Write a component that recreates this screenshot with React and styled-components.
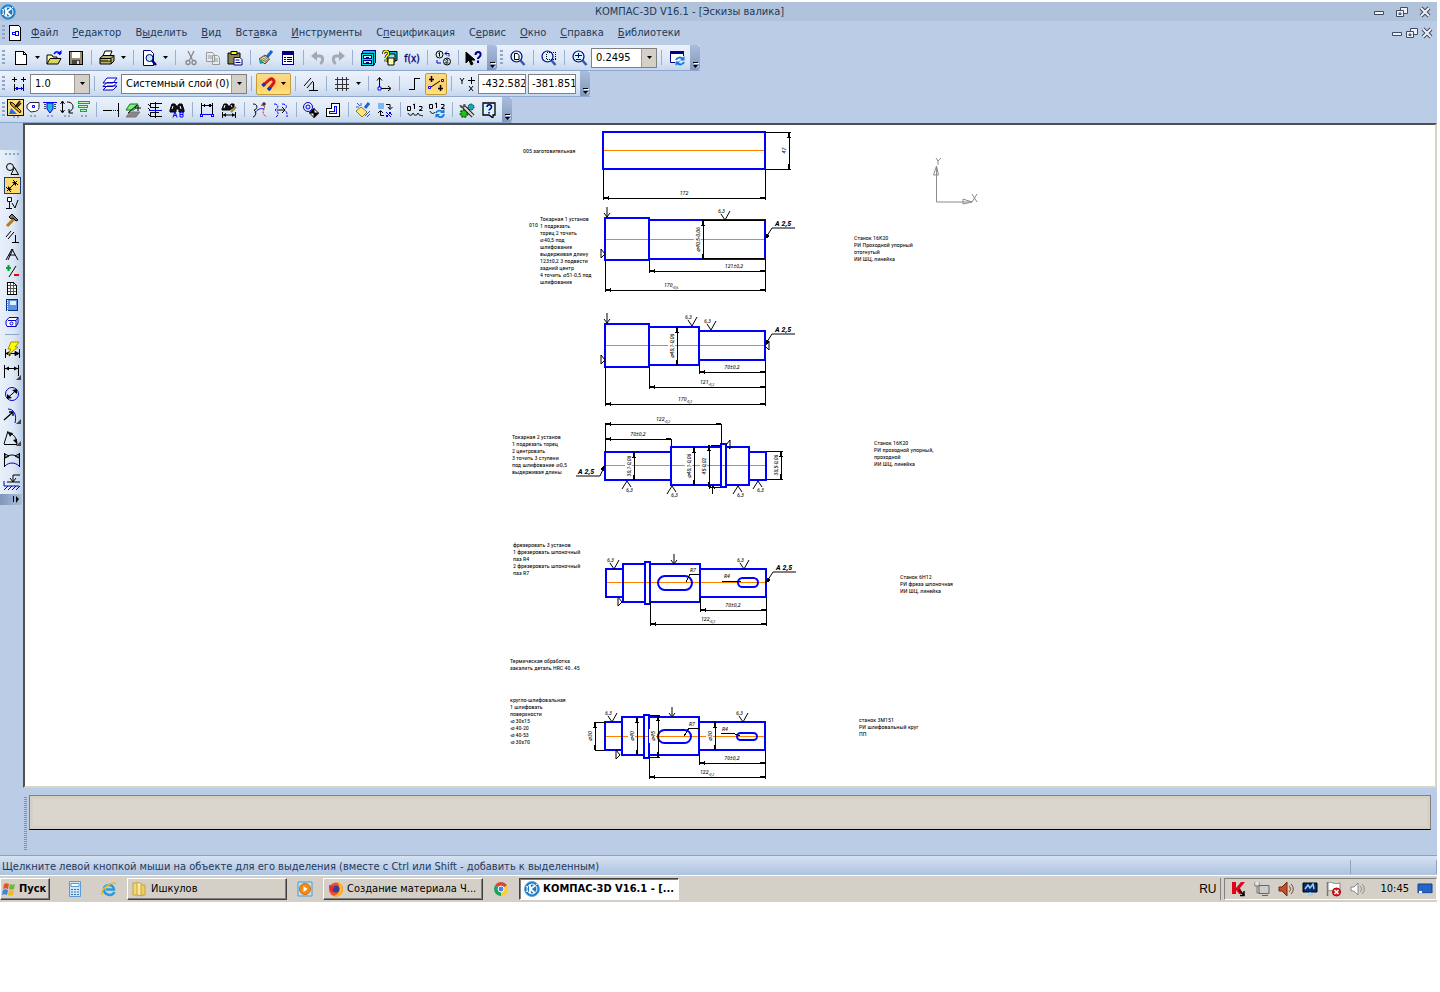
import React from 'react';
import styled, { createGlobalStyle } from 'styled-components';

const GlobalStyle = createGlobalStyle`
  body {
    margin: 0;
    background: #fff;
  }
  button, input, select {
    font: inherit;
    color: inherit;
  }
`;

const App = styled.div`
  margin: 2px 3px 0 0;
  background: #bbcde6;
  color: #000;
  font-family: 'DejaVu Sans Condensed', 'DejaVu Sans', sans-serif;
  font-size: 11px;
  line-height: 14px;
`;

const TitleBar = styled.header`
  display: flex;
  align-items: center;
  height: 19px;
  background: #b0c3da;
  color: #1e395b;
`;
const Title = styled.h1`
  flex: 1;
  margin: 0;
  padding-right: 10px;
  font-size: 11px;
  font-weight: normal;
  text-align: center;
`;
const WindowButtons = styled.div`
  display: flex;
  gap: ${p => p.$gap}px;
  padding-right: ${p => p.$end}px;
`;
const PlainButton = styled.button`
  display: flex;
  align-items: center;
  justify-content: center;
  padding: 0;
  border: 0;
  background: none;
`;

const MenuBar = styled.nav`
  display: flex;
  align-items: center;
  height: 24px;
  padding-left: 2px;
  color: #1e395b;
`;
const MenuList = styled.div`
  display: flex;
  flex: 1;
  gap: 14px;
  padding-left: 9px;
`;
const MenuLink = styled.a`
  color: inherit;
  text-decoration: none;
`;

const ToolRow = styled.div`
  display: flex;
  height: 26px;
`;
const Toolbar = styled.div`
  display: flex;
  align-items: center;
  box-sizing: border-box;
  height: 26px;
  padding-left: ${p => p.$start || 0}px;
  border-bottom: 1px solid #8ea8cf;
  background: linear-gradient(#eaf1fb, #dde8f6 60%, #c6d7ee);
`;
const Grip = styled.span`
  width: 3px;
  height: 16px;
  margin-right: ${p => p.$after || 7}px;
  background: repeating-linear-gradient(#8fa6c9 0 2px, transparent 2px 4px);
`;
const ToolButton = styled.button`
  display: flex;
  align-items: center;
  justify-content: center;
  box-sizing: border-box;
  width: ${p => p.$w || 22}px;
  height: 22px;
  padding: 0;
  border: 1px solid ${p => (p.$on ? '#c29b3c' : 'transparent')};
  border-radius: 2px;
  background: ${p => (p.$on ? 'linear-gradient(#fbdb8c, #fdcf6a 60%, #ffe37e)' : 'none')};
`;
const SmallButton = styled.button`
  display: flex;
  flex-direction: column;
  align-items: center;
  box-sizing: border-box;
  width: 17px;
  height: 21px;
  padding: 0;
  border: 0;
  background: none;
`;
const SmallIcon = styled.span`
  display: flex;
  box-sizing: border-box;
  border: 1px solid ${p => (p.$on ? '#000080' : 'transparent')};
  background: ${p => (p.$on ? '#ffdf7a' : 'none')};
`;
const Dots = styled.span`
  width: 6px;
  height: 2px;
  background: linear-gradient(90deg, #8fa6c9 2px, transparent 2px 4px, #8fa6c9 4px);
`;
const Separator = styled.span`
  width: 1px;
  height: 15px;
  margin: 0 ${p => (p.$tight ? 3 : 4)}px 0 4px;
  background: #9ab0d2;
`;
const ArrowButton = styled(PlainButton)`
  width: 11px;
  height: 22px;
`;
const Tail = styled.span`
  display: flex;
  align-items: flex-end;
  justify-content: center;
  align-self: stretch;
  width: 10px;
  margin-left: 2px;
  border-radius: 0 3px 3px 0;
  background: linear-gradient(#a9bedd, #8197bb);
`;
const Combo = styled.span`
  display: flex;
  box-sizing: border-box;
  width: ${p => p.$w}px;
  height: 20px;
  border: 1px solid #808080;
  background: #fff;
`;
const ComboSelect = styled.select`
  flex: 1;
  min-width: 0;
  padding: 0 0 0 4px;
  border: 0;
  background: #fff;
  appearance: none;
`;
const ComboArrow = styled.span`
  display: flex;
  align-items: center;
  justify-content: center;
  width: 14px;
  border-left: 1px solid #a09c94;
  background: #d4d0c8;
`;
const CoordInput = styled.input`
  box-sizing: border-box;
  width: 48px;
  height: 20px;
  margin-right: 2px;
  padding: 0 0 0 3px;
  border: 1px solid #808080;
  background: #fff;
`;

const Workspace = styled.main`
  display: flex;
  align-items: flex-start;
`;
const SideColumn = styled.aside`
  flex: none;
  width: 23px;
  padding-top: 27px;
`;
const SidePanel = styled.div`
  display: flex;
  flex-direction: column;
  align-items: center;
  box-sizing: border-box;
  width: 22px;
  padding: 3px 0 1px 2px;
  border-radius: 0 3px 0 0;
  background: linear-gradient(90deg, #e8f0fa, #dde8f6 60%, #bdd0ea);
`;
const SideDots = styled.span`
  width: 14px;
  height: 2px;
  margin-bottom: 5px;
  background: repeating-linear-gradient(90deg, #8fa6c9 0 2px, transparent 2px 4px);
`;
const SideButton = styled.button`
  display: flex;
  align-items: center;
  justify-content: center;
  box-sizing: border-box;
  width: ${p => (p.$tall ? 20 : 17)}px;
  height: ${p => (p.$tall ? 22 : 17)}px;
  padding: 0;
  border: 1px solid ${p => (p.$on ? '#1c3d7c' : 'transparent')};
  background: ${p => (p.$on ? '#ffd96a' : 'none')};
`;
const SideRule = styled.span`
  width: 14px;
  height: 1px;
  margin: 4px 0;
  background: #8fa6c9;
`;
const SideTail = styled.div`
  display: flex;
  align-items: center;
  justify-content: flex-end;
  width: 22px;
  height: 11px;
  background: linear-gradient(90deg, #8197bb, #a9bedd);
`;
const Canvas = styled.section`
  flex: 1;
  min-width: 0;
  border: 2px solid;
  border-color: #505050 #d6d3c9 #d6d3c9 #505050;
  background: #fff;
`;
const Sheet = styled.svg`
  display: block;
  width: 100%;
  height: 661px;
`;

const PropertyArea = styled.section`
  display: flex;
  gap: 2px;
  height: 67px;
  padding: 0 6px 0 24px;
`;
const PropertyGrip = styled.span`
  width: 3px;
  height: 53px;
  margin-top: 9px;
  background: repeating-linear-gradient(#948f84 0 1px, transparent 1px 2px);
`;
const PropertyPanel = styled.div`
  flex: 1;
  box-sizing: border-box;
  height: 35px;
  margin-top: 7px;
  border: 1px solid #808080;
  border-bottom-color: #000;
  background: #dad6ce;
  box-shadow: inset 0 0 0 3px #d4d0c4;
`;

const StatusBar = styled.footer`
  display: flex;
  align-items: center;
  box-sizing: border-box;
  height: 20px;
  padding: 2px 0 0 2px;
  border-top: 1px solid #87a2c9;
  background: linear-gradient(#d6e2f2, #adc3e0);
  color: #1e395b;
`;
const StatusText = styled.span`
  flex: 1;
`;
const StatusCell = styled.span`
  width: 85px;
  height: 14px;
  border-left: 1px solid #8ba3c4;
  border-right: 1px solid #8ba3c4;
`;

const TaskBar = styled.footer`
  display: flex;
  align-items: center;
  height: 26px;
  border-top: 1px solid #fff;
  background: #d4d0c8;
`;
const TaskButton = styled.button`
  display: flex;
  align-items: center;
  gap: 3px;
  box-sizing: border-box;
  width: ${p => p.$w || 160}px;
  height: 22px;
  padding: 0 ${p => (p.$w ? 1 : 4)}px;
  border: 1px solid;
  border-color: ${p => (p.$on ? '#404040 #fff #fff #404040' : '#fff #404040 #404040 #fff')};
  box-shadow: inset ${p => (p.$on ? '1px 1px' : '-1px -1px')} #808080;
  background: ${p => (p.$on ? '#fff' : '#d4d0c8')};
  font-weight: ${p => (p.$bold ? 'bold' : 'normal')};
  white-space: nowrap;
`;
const QuickButton = styled(PlainButton)`
  width: ${p => (p.$narrow ? 34 : 36)}px;
  height: 22px;
`;
const QuickGroup = styled.span`
  display: flex;
  padding: 0 1px 0 8px;
`;
const Language = styled.span`
  flex: 1;
  padding-right: 4px;
  font-family: 'Liberation Sans', Arial, sans-serif;
  font-size: 12px;
  text-align: right;
`;
const Tray = styled.div`
  display: flex;
  align-items: center;
  gap: 8px;
  box-sizing: border-box;
  height: 22px;
  margin-left: 3px;
  padding: 0 3px 0 5px;
  border: 1px solid;
  border-color: #808080 #fff #fff #808080;
`;
const TrayRule = styled.span`
  width: 1px;
  height: 22px;
  background: #808080;
`;
const Clock = styled.time`
  padding: 0 0 0 6px;
`;

/* ---------- icons ---------- */

const Icon = ({ w = 16, h = 16, children, crisp }) => (
  <svg
    width={w}
    height={h}
    viewBox={`0 0 ${w} ${h}`}
    fill="none"
    stroke="#000"
    shapeRendering={crisp ? 'crispEdges' : 'auto'}
    aria-hidden="true"
  >
    {children}
  </svg>
);

const Arrow = () => (
  <svg width="5" height="3" viewBox="0 0 5 3" aria-hidden="true">
    <path d="M0 0h5L2.5 3z" />
  </svg>
);

const TailMark = () => (
  <svg width="7" height="9" viewBox="0 0 7 9" aria-hidden="true">
    <path d="M1 1h5v1H1zM1 4h5L3.500 7z" />
    <path d="M2 2h5v1H2zM6 5h1L4 8z" fill="#fff" />
  </svg>
);

const KompasLogo = () => (
  <Icon>
    <circle cx="8" cy="8" r="7.500" fill="#1c77c3" stroke="#5aa5de" />
    <circle cx="8" cy="8" r="5" stroke="#fff" />
    <path d="M6 4v8M11 4.500L6.500 8l4.500 4" stroke="#fff" strokeWidth="1.800" />
    <path d="M2 5l2 2M2 11l2-2M13 3l-1 1" stroke="#fff" />
  </Icon>
);

const icons = {
  doc: (
    <Icon crisp>
      <path d="M2.500 1.500h8l3 3v10h-11z" fill="#fff" />
      <path d="M10.500 1.500v3h3" />
    </Icon>
  ),
  open: (
    <Icon>
      <path d="M1 14V5h5l1 2h4v2" fill="#ffff9c" />
      <path d="M1 14l3-5.500h11L12 14z" fill="#d8d860" />
      <path d="M8 4c2-3 5-3 6 1" stroke="#00f" strokeWidth="1.500" />
      <path d="M11 4h4.500V0z" fill="#00f" stroke="none" />
    </Icon>
  ),
  save: (
    <Icon crisp>
      <path d="M1.500 1.500h13v13h-13z" fill="#9b8c6c" />
      <path d="M4 2h8v6H4z" fill="#fff" stroke="none" />
      <path d="M4 10h8v4H4z" fill="#444" stroke="none" />
      <path d="M9 11h2v3H9z" fill="#ddd" stroke="none" />
    </Icon>
  ),
  print: (
    <Icon>
      <path d="M4 6l2-5h7l-2 5z" fill="#fff" />
      <path d="M1 8l3-2.500h11V11l-3 3H1z" fill="#b4b470" />
      <path d="M1 8.500h11v5M12 8.500l3-3M1 11h11" />
      <path d="M9 10h2" stroke="#ff0" />
    </Icon>
  ),
  preview: (
    <Icon>
      <path d="M2.500.500h7l3 3v12h-10z" fill="#fff" stroke="#000080" />
      <circle cx="8.500" cy="8" r="3.500" fill="#bdeaff" stroke="#000080" />
      <path d="M11 10.500l4 4.500" stroke="#000080" strokeWidth="2.500" />
    </Icon>
  ),
  cut: (
    <Icon>
      <path d="M5 1l4.500 9M11 1L6.500 10" stroke="#888" strokeWidth="1.300" />
      <circle cx="5" cy="12.500" r="2" stroke="#888" strokeWidth="1.300" />
      <circle cx="11" cy="12.500" r="2" stroke="#888" strokeWidth="1.300" />
    </Icon>
  ),
  copy: (
    <Icon>
      <path d="M1.500 2.500h6l2 2v7h-8zM7.500 5.500h5l2 2v7h-7z" fill="#e6ebf2" stroke="#999" />
      <path d="M3 6h4M3 8h4M9 9h4M9 11h4" stroke="#999" />
    </Icon>
  ),
  paste: (
    <Icon>
      <path d="M1 3h12v11H1z" fill="#8b8455" />
      <path d="M4 1.500h6v3H4z" fill="#ff0" />
      <path d="M7 7.500h6l2 2V15H7z" fill="#fff" stroke="#000080" />
      <path d="M8.500 10h4M8.500 12.500h5" stroke="#000080" />
    </Icon>
  ),
  brush: (
    <Icon>
      <path d="M14 1l-5 6" stroke="#1d65c9" strokeWidth="3" />
      <path d="M7 5l4.500 4L7 14 1 9z" fill="#e8d98a" stroke="#444" />
      <path d="M6 6l5 4.500M3 9l5 3M5 8l4 3" stroke="#777" />
      <path d="M1 9l1 5 4-1z" fill="#0a9aa5" stroke="none" />
    </Icon>
  ),
  props: (
    <Icon crisp>
      <path d="M2.500 1.500h11v13h-11z" fill="#fff" stroke="#000080" />
      <path d="M2 1h12v4H2z" fill="#000080" stroke="none" />
      <path d="M4 7.500h2M4 9.500h2M4 11.500h2M7 7.500h5M7 9.500h5M7 11.500h5" stroke="#000" />
    </Icon>
  ),
  undo: (
    <Icon>
      <path d="M5 6h4.500c4 0 4 5 1 8" stroke="#a3a9b2" strokeWidth="3" />
      <path d="M7 1v10L1 6z" fill="#a3a9b2" stroke="none" />
    </Icon>
  ),
  redo: (
    <Icon>
      <path d="M11 6H6.500c-4 0-4 5-1 8" stroke="#a3a9b2" strokeWidth="3" />
      <path d="M9 1v10l6-5z" fill="#a3a9b2" stroke="none" />
    </Icon>
  ),
  library: (
    <Icon crisp>
      <path d="M1.500 3.500l2-3h12v12l-2 3h-12z" fill="#00c8d0" stroke="#000080" />
      <path d="M1.500 3.500h12v12h-12z" fill="#00dce0" stroke="#000080" />
      <path d="M3.500 5.500h8v3h-8zM3.500 10.500h8v3h-8z" stroke="#000080" fill="#b8f6f6" />
      <path d="M6 7h3M6 12h3" stroke="#000080" />
    </Icon>
  ),
  variables: (
    <Icon>
      <path d="M7 1.500h8v9H7z" fill="#00c8d0" />
      <path d="M5 4h8v8H5z" fill="#8be5e5" />
      <path d="M6 8h6v7H6z" fill="#ffffa8" />
      <path d="M1.500 4c0-4 5.500-4 5 0C6.500 6 4 5 4 8M4 9.500v2" stroke="#000" strokeWidth="3" />
      <path d="M1.500 4c0-4 5.500-4 5 0C6.500 6 4 5 4 8M4 9.500v2" stroke="#ff0" strokeWidth="1.500" />
    </Icon>
  ),
  func: (
    <svg width="20" height="16" viewBox="0 0 20 16" aria-hidden="true">
      <text x="10" y="12" textAnchor="middle" fill="#000080" stroke="#000080" strokeWidth="0.300" fontSize="10">
        f(x)
      </text>
    </svg>
  ),
  renumber: (
    <Icon>
      <circle cx="4.500" cy="4.500" r="3.500" />
      <circle cx="12" cy="11.500" r="3.500" />
      <path d="M3.500 3.500l1-1v4M10.500 10.500c1-2 3-1 2 .500l-2 2h3" />
      <path d="M10 3.500h4v3M2 10v3h4M12 1.500l-2 2 2 2" stroke="#00c" />
    </Icon>
  ),
  help: (
    <Icon w={18}>
      <path d="M1 2v11l3-3 2 5 2-1-2-4h4z" fill="#000" />
      <path d="M10.500 5c0-4 6-4 5 0 0 2-2.500 2-2.500 4M13 10.500V13" stroke="#000080" strokeWidth="2" />
    </Icon>
  ),
  zoomPage: (
    <Icon>
      <circle cx="6.500" cy="6.500" r="5.500" fill="#d9f3ff" stroke="#000080" strokeWidth="1.200" />
      <path d="M4.500 3.500h3l1.500 2v4H4.500z" fill="#fff" />
      <path d="M10.500 10.500l4 4.500" stroke="#3458b0" strokeWidth="2.500" />
    </Icon>
  ),
  zoomArea: (
    <Icon>
      <circle cx="6.500" cy="6.500" r="5.500" fill="#d9f3ff" stroke="#000080" strokeWidth="1.200" />
      <path d="M5.500 2.500h9v7h-9z" strokeDasharray="1 1" shapeRendering="crispEdges" />
      <path d="M10.500 10.500l4 4.500" stroke="#3458b0" strokeWidth="2.500" />
    </Icon>
  ),
  zoomIn: (
    <Icon>
      <circle cx="6.500" cy="6.500" r="5.500" fill="#d9f3ff" stroke="#000080" strokeWidth="1.200" />
      <path d="M6.500 3v5M3 5.500h7M4 9.500h5" stroke="#000080" />
      <path d="M10.500 10.500l4 4.500" stroke="#3458b0" strokeWidth="2.500" />
    </Icon>
  ),
  refresh: (
    <Icon>
      <path d="M6 12.500H1.500v-11h13V6" fill="#fff" stroke="#000080" />
      <path d="M1 2.500h14" stroke="#000080" strokeWidth="3" />
      <path d="M7 10c1-3 5-3 7-1M15 12c-1 3-5 3-7 1" stroke="#1677dc" strokeWidth="2" />
      <path d="M15.500 6v4.500H11zM6.500 16v-4.500H11z" fill="#1677dc" stroke="none" />
    </Icon>
  ),
  step: (
    <Icon crisp>
      <path d="M3.500 1v5M1 3.500h5M12.500 1v5M10 3.500h5M3.500 8v7M12.500 8v7" />
      <path d="M4 12.500h8" stroke="#00f" />
      <path d="M3.500 12.500l3-2v4zM12.500 12.500l-3-2v4z" fill="#00f" stroke="none" />
    </Icon>
  ),
  layers: (
    <Icon>
      <path d="M1 14l4-4h10l-4 4zM1 10.500l4-4h10l-4 4zM1 7l4-5h10l-4 5z" fill="#fff" stroke="#0000c8" />
    </Icon>
  ),
  magnet: (
    <Icon>
      <path d="M2.500 9L8 4c3-3 7 1 4 4l-4 5" stroke="#d81414" strokeWidth="3" />
      <path d="M1.500 10l2.500-2.500M7 14l2.500-2.500" stroke="#1437c8" strokeWidth="3.500" />
    </Icon>
  ),
  perp: (
    <Icon>
      <path d="M1 10l7-8M4 12l6-7" />
      <path d="M10.500 6v8M6 14.500h9" />
    </Icon>
  ),
  grid: (
    <Icon crisp>
      <path d="M3.500 1v14M8.500 1v14M12.500 1v14M1 3.500h14M1 8.500h14M1 12.500h14" stroke="#333" />
    </Icon>
  ),
  axes: (
    <Icon>
      <path d="M3.500 2v10.500H14M1 4.500l2.500-3 2.500 3M12 10l3 2.500-3 2.500" />
      <path d="M2 11h3v3H2z" fill="#fff" stroke="#00f" />
    </Icon>
  ),
  ortho: (
    <Icon crisp>
      <path d="M3 13.500h5.500v-11H14" />
    </Icon>
  ),
  snaps: (
    <Icon w={18}>
      <path d="M4.500 0v6M2 3.500h5M13.500 9v6M11 12.500h5" strokeWidth="1.500" />
      <path d="M4 11l9-6" />
      <path d="M1.500 10.500h2v2h-2zM14.500 3.500h2v2h-2z" fill="#fff" stroke="#00f" />
    </Icon>
  ),
  coords: (
    <Icon>
      <path d="M1 2l2 3 2-3M3 5v3M10 10l4 5M14 10l-4 5M12.500 1v7M9 4.500h7" />
    </Icon>
  ),
  geom: (
    <Icon w={15} h={15}>
      <path d="M1 14l2-6 6 6z" fill="#2a6ae8" stroke="none" />
      <path d="M2 2l3 1 8 8-1 2-9-8z" fill="#f0a000" stroke="#111" />
      <path d="M12 1L7 7M13 3L9 7" stroke="#111" strokeWidth="1.500" />
    </Icon>
  ),
  contour: (
    <Icon h={14}>
      <path d="M5 2.500h9v5c0 3-3 4-5 4L6 12 2 8.500V5z" fill="#fff" stroke="#224" />
      <path d="M7.500 5.500h2v2h-2z" stroke="#00f" />
    </Icon>
  ),
  pocket: (
    <Icon h={14}>
      <path d="M1 2.500h14" stroke="#00f" />
      <path d="M5 3h6v6l-3 4-3-4z" fill="#22b5e8" stroke="#00f" />
      <path d="M3 4v5M13 4v5" stroke="#444" strokeDasharray="1 1" strokeWidth="2" />
    </Icon>
  ),
  updown: (
    <Icon h={14}>
      <path d="M3.500 2v10M1.500 4l2-3 2 3M1.500 10l2 3 2-3M8 2c5 0 6 3 6 5s-1 3-4 5M10 9v4h4" />
    </Icon>
  ),
  tree: (
    <Icon h={14} crisp>
      <path d="M2.500 1.500h11v2h-11zM2.500 5.500h9v2h-9zM4.500 9.500h6v2h-6z" stroke="#00b428" fill="#c9f2c9" />
    </Icon>
  ),
  extend: (
    <Icon crisp>
      <path d="M0 8.500h9M15.500 1v14" />
      <path d="M10 8.500h5" strokeDasharray="1 1" />
    </Icon>
  ),
  planes: (
    <Icon>
      <path d="M1 15l4-5h10l-4 5z" fill="#888" stroke="#777" />
      <path d="M1 8l4-6h8l-4 6z" fill="#7ef07e" stroke="#137a13" />
      <path d="M13 3v6M10 6h6M3 11l9-8" />
    </Icon>
  ),
  align: (
    <Icon crisp>
      <path d="M8.500 0v16M15 1.500H3.500v4H12M12 10.500H3.500v4H15M1 2l2 2M1 6l3 3M1 12l3 3" />
      <path d="M2 8.500h13" stroke="#00f" />
    </Icon>
  ),
  find: (
    <Icon>
      <path d="M1 8l2-6h3l1 2h2l1-2h3l2 6v2h-5V7H7v3H1z" fill="#111" />
      <path d="M3 7l1-3M11 4l1 3" stroke="#fff" />
      <path d="M4 15.500l2-6 2 6M5 13.500h2M11 10v5h3v-5h-3M11 12.500h3" stroke="#00f" />
    </Icon>
  ),
  measure: (
    <Icon crisp>
      <path d="M2.500 1v14M13.500 1v14M3 3.500h10" />
      <path d="M3 12.500h10" stroke="#00f" />
      <path d="M1.500 12.500h2v2h-2zM12.500 12.500h2v2h-2z" stroke="#00f" fill="#fff" />
      <path d="M3 3.500l3-2v4zM13 3.500l-3-2v4z" fill="#000" stroke="none" />
    </Icon>
  ),
  findSize: (
    <Icon>
      <path d="M1 7l2-5h3l1 2h2l1-2h3v3L9 8H1z" fill="#111" />
      <path d="M3 6l1-3M10 3l1 2" stroke="#fff" />
      <path d="M15 5l-5 5" stroke="#a28a24" strokeWidth="2" />
      <path d="M1.500 10v6M14.500 10v6M2 13h12" />
      <path d="M2 13l3-2v4zM14 13l-3-2v4z" fill="#000" stroke="none" />
    </Icon>
  ),
  bend: (
    <Icon>
      <path d="M2 2c6 0 4 6 1 6 3 2 2 6-1 7" />
      <path d="M4 11c2-4 6-5 9-4" stroke="#00f" />
      <path d="M10 3c5 1 4 3 2 6 0 4 2 4 3 6" stroke="#e00" strokeDasharray="2 1" />
      <path d="M13 0v4M11 2h4" />
    </Icon>
  ),
  bendAll: (
    <Icon>
      <path d="M1 2c5 0 5 4 1 6 4 2 4 5 1 7M9 2c6 0 5 4 2 6 4 2 3 5 3 7" stroke="#00f" strokeDasharray="3 1" />
      <path d="M9 5l3 3-3 3M4 8h7" />
    </Icon>
  ),
  shade: (
    <Icon>
      <circle cx="5" cy="5" r="4.500" stroke="#0000c8" />
      <circle cx="5" cy="5" r="2" stroke="#0000c8" />
      <path d="M11 6.500l4.500 4.500-4.500 4.500L6.500 11z" fill="#fff" />
      <path d="M11 6.500V11H6.500zM11 15.500V11h4.500z" fill="#000" />
    </Icon>
  ),
  equid: (
    <Icon crisp>
      <path d="M1.500 14.500v-8h5v-5h8v13z" fill="#fff" />
      <path d="M4.500 11.500v-2h5v-5h2v7z" stroke="#00f" fill="#dfe8ff" />
    </Icon>
  ),
  paint: (
    <Icon>
      <path d="M14 1l-4 5" stroke="#1d65c9" strokeWidth="3" />
      <path d="M6 5l6 5-5 5-6-6z" fill="#ffe680" stroke="#9a7a10" />
      <path d="M2 1l3 3M1 5h3M6 1v3M10 14l5-5M12 15l3-3" stroke="#1c58d8" />
    </Icon>
  ),
  replace: (
    <Icon>
      <path d="M1 1h6v6H1z" fill="#7fb8ef" stroke="none" />
      <path d="M9 2.500h4V7M11 5l2 2.500L15.500 5M7 13.500H3.500V9M1 11l2.500-2.500L6 11" />
      <path d="M9 10l5 5M12 10l3 3M9 13l2 2M14 10l-5 5" stroke="#00c" />
    </Icon>
  ),
  count: (
    <Icon w={18}>
      <path d="M1.500 4.500h3v4h-3zM7 3l1.500-1v5M13 4.500h3v2l-3 2h3.500" />
      <path d="M2 11c1 3 4 3 5 0 1 3 4 3 5 0 1 3 3 2 5 3" />
    </Icon>
  ),
  countRefresh: (
    <Icon w={18}>
      <path d="M1.500 2.500h3v4h-3zM7 2l1.500-1v5M13 2.500h3v2l-3 2h3.500M2 9c1 3 4 3 5 1" />
      <path d="M8 11c1-3 5-3 7-1M16 12c-1 4-5 4-7 1" stroke="#1677dc" strokeWidth="1.800" />
      <path d="M16.500 7v4H12zM7.500 16v-4H12z" fill="#1677dc" stroke="none" />
    </Icon>
  ),
  wrench: (
    <Icon>
      <circle cx="12" cy="5" r="3" fill="#1aa7b8" strokeDasharray="1 1" />
      <circle cx="5" cy="11.500" r="3.500" fill="#1fc41f" stroke="#0a700a" strokeDasharray="2 1" strokeWidth="2" />
      <path d="M4 4l10 10" stroke="#222" strokeWidth="4" />
      <path d="M4 4l10 10" stroke="#ddd" strokeWidth="2" />
      <path d="M1.500 3c0 3 4 3 4-1" stroke="#555" strokeWidth="2" />
    </Icon>
  ),
  helpBox: (
    <Icon>
      <path d="M2 1h12v12h-2v3l-4-3H2z" fill="#d8f4ff" strokeWidth="1.300" />
      <path d="M6 5c0-3 4.500-3 4.500 0C10.500 7 8 7 8 8.500M8 10v1.500" stroke="#000080" strokeWidth="1.500" />
    </Icon>
  ),
};

const sideIcons = {
  shapes: (
    <Icon w={14} h={14}>
      <circle cx="5" cy="5" r="3.500" />
      <path d="M6 12.500l3.500-7 4 7z" />
    </Icon>
  ),
  size: (
    <Icon w={14} h={14}>
      <path d="M2 12L12 2M1 8l5 5M8 1l5 5" />
      <path d="M3 11V7l4 4zM11 3v4L7 3z" fill="#000" stroke="none" />
    </Icon>
  ),
  marks: (
    <Icon w={14} h={14}>
      <path d="M2.500 1.500h4v4h-4zM4.500 6v6.500" stroke="#0000a8" fill="#fff" />
      <path d="M1 12.500h6M7 7l3 5 3-8" />
    </Icon>
  ),
  hammer: (
    <Icon w={14} h={14}>
      <path d="M2 13l7-7" stroke="#b97a1c" strokeWidth="3" />
      <path d="M4 4l3-3 6 6-2 1-3-3-2 1z" fill="#777" />
    </Icon>
  ),
  perp: (
    <Icon w={14} h={14}>
      <path d="M1 7l5-6M3 9l6-7M10.500 5v7M7 12.500h7" />
    </Icon>
  ),
  compass: (
    <Icon w={14} h={14}>
      <path d="M1 13L7 2l6 11M3 13L8 2M4 8h6" />
    </Icon>
  ),
  plusminus: (
    <Icon w={14} h={14}>
      <path d="M3.500 1v6M1 4h5" stroke="#00a030" strokeWidth="2" />
      <path d="M4 13l7-11" />
      <path d="M9 11h5" stroke="#e00" strokeWidth="2" />
    </Icon>
  ),
  sheet: (
    <Icon w={14} h={14} crisp>
      <path d="M2.500 1.500h6l3 3v9h-9z" fill="#fff" />
      <path d="M5.500 2v11M8.500 2v11M3 4.500h8M3 7.500h8M3 10.500h8" stroke="#555" />
    </Icon>
  ),
  book: (
    <Icon w={14} h={14} crisp>
      <path d="M1.500 1.500h11v11h-11z" fill="#5b93e6" stroke="#0a2f86" />
      <path d="M2.500 2v11" stroke="#fff" strokeDasharray="1 1" />
      <path d="M5 3h6v4H5z" fill="#dff0ff" stroke="none" />
    </Icon>
  ),
  part: (
    <Icon w={14} h={14}>
      <path d="M4 2.500h9V8l-2 3.500H2L1 9V6z" fill="#fff" stroke="#0000d0" />
      <path d="M3 5.500h8v6M13 2.500l-2 3" stroke="#0000d0" />
      <circle cx="6.500" cy="8.500" r="1.500" stroke="#0000d0" />
    </Icon>
  ),
  auto: (
    <Icon w={18} h={18}>
      <path d="M2.500 8v9M16.500 8v9M3 12.500h13" />
      <path d="M3 12.500l4-2v4zM16 12.500l-4-2v4z" fill="#000" />
      <path d="M8 1h8l-4 5h3L5 14l3-6H5z" fill="#ff0" stroke="#a69000" />
    </Icon>
  ),
  linear: (
    <Icon w={18} h={18}>
      <path d="M1.500 2v13M15.500 2v11M2 5.500h13" />
      <path d="M2 5.500l4-2v4zM15 5.500l-4-2v4z" fill="#000" stroke="none" />
      <path d="M18 12v5h-5z" fill="#444" stroke="none" />
    </Icon>
  ),
  diameter: (
    <Icon w={18} h={18}>
      <circle cx="9" cy="9" r="6.500" stroke="#0000d0" />
      <path d="M4 13.500L14 4.500" />
      <path d="M4 14V9l5 4zM14 4v5L9 5z" fill="#000" stroke="none" />
    </Icon>
  ),
  radius: (
    <Icon w={18} h={18}>
      <path d="M5 2c6 0 9 6 7 14" stroke="#0000d0" />
      <path d="M1 13l9-8M10 5v4M10 5H6" strokeWidth="1.300" />
      <path d="M18 12v5h-5z" fill="#444" stroke="none" />
    </Icon>
  ),
  angle: (
    <Icon w={18} h={18}>
      <path d="M1 15.500h13M1 15L5 2M5 4c5 0 9 5 9 11" />
      <path d="M5 3l5 1-3 4zM14 15l-4-4 4-1z" fill="#000" stroke="none" />
      <path d="M18 12v5h-5z" fill="#444" stroke="none" />
    </Icon>
  ),
  arc: (
    <Icon w={18} h={18}>
      <path d="M1.500 2v14M16.500 2v14M2 7c4-4 10-4 14 0M2 7V3l4 2zM16 7V3l-4 2z" />
      <path d="M2 15c4-4 10-4 14 0" stroke="#0000d0" />
    </Icon>
  ),
  height: (
    <Icon w={18} h={18}>
      <path d="M10 8V2h7M7 5l3 4 3-4M4 9h13" />
      <path d="M1 8v5h15M1 17l4-4M5 17l4-4M9 17l4-4M13 17l4-4" stroke="#0000d0" />
    </Icon>
  ),
};

const trayIcons = {
  kaspersky: (
    <Icon>
      <path d="M2 1h4v6l5-6h4l-5 6 3 6H9L6 9v4H2z" fill="#e2001a" stroke="none" />
      <path d="M9 9l5 5M14 10v4.500h-4" strokeWidth="1.500" />
    </Icon>
  ),
  network: (
    <Icon>
      <path d="M5 4.500h10v8H5zM8 14.500h6" fill="#ccc" stroke="#666" />
      <path d="M1 1v4h4V1M3 5v7h3" stroke="#777" />
      <path d="M2 1v3M4 1v3" stroke="#fff" />
    </Icon>
  ),
  sound: (
    <Icon>
      <path d="M1 6h3l5-5v14l-5-5H1z" fill="#c4502a" stroke="#6e2a14" />
      <path d="M11 5c2 2 2 4 0 6M13 3c3 3 3 7 0 10" stroke="#7a3b2a" />
    </Icon>
  ),
  display: (
    <Icon>
      <path d="M1 2h14v9H1z" fill="#0d2c6b" />
      <path d="M6 14h5M8 11v3M3 8l3-4 2 3 3-4 1 5" stroke="#8fd4ff" strokeWidth="1.500" />
    </Icon>
  ),
  flag: (
    <Icon>
      <path d="M1.500 1v14" stroke="#777" strokeWidth="1.500" />
      <path d="M2 2c4-2 5 2 12 0v8c-6 2-8-2-12 0z" fill="#fff" stroke="#888" />
      <circle cx="10.500" cy="11" r="4" fill="#d8202a" stroke="#a00" />
      <path d="M8.500 9l4 4M12.500 9l-4 4" stroke="#fff" strokeWidth="1.500" />
    </Icon>
  ),
  volume: (
    <Icon>
      <path d="M1 6h3l4-4v12l-4-4H1z" fill="#fff" stroke="#888" />
      <path d="M10 5c2 2 2 4 0 6M12 3c3 3 3 7 0 10" stroke="#888" />
    </Icon>
  ),
};

const WindowIcon = ({ kind }) => (
  <Icon w={12} h={12}>
    {kind === 'min' && <path d="M1.500 5.500h9v3h-9z" fill="#eef2f8" stroke="#3f4a63" />}
    {kind === 'restore' && (
      <g stroke="#3f4a63" fill="#eef2f8">
        <path d="M4.500 1.500h7v6h-7z" />
        <path d="M.5 4.500h7v6h-7zM3 7h2v1.500H3z" />
      </g>
    )}
    {kind === 'close' && (
      <g>
        <path d="M2 2l8 8M10 2l-8 8" stroke="#3f4a63" strokeWidth="4" />
        <path d="M2 2l8 8M10 2l-8 8" stroke="#eef2f8" strokeWidth="2" />
      </g>
    )}
  </Icon>
);

/* ---------- drawing primitives ---------- */

const Label = styled.text`
  font-family: 'Roboto Condensed', 'Liberation Sans Narrow', 'Liberation Sans', sans-serif;
  font-size: ${p => p.$size || 6}px;
  font-style: ${p => (p.$upright ? 'normal' : 'italic')};
  font-weight: ${p => (p.$bold ? 'bold' : 'normal')};
  fill: #000;
  stroke: none;
`;

const Note = ({ x, y, lines }) => (
  <g>
    {lines.map((line, i) => (
      <Label key={i} x={x} y={y + i * 7} $upright>
        {line}
      </Label>
    ))}
  </g>
);

const HDim = ({ x1, x2, y, from, text, sub, at }) => (
  <g>
    <path d={`M${x1} ${from}V${y + 2}M${x2} ${from}V${y + 2}M${x1} ${y}H${x2}`} />
    <path d={`M${x1} ${y}l5 -1v2zM${x2} ${y}l-5 -1v2z`} fill="#000" />
    <Label x={at || (x1 + x2) / 2} y={y - 3} textAnchor="middle">
      {text}
      {sub && <tspan fontSize="4" dy="2">{sub}</tspan>}
    </Label>
  </g>
);

const VDim = ({ x, y1, y2, from, text }) => (
  <g>
    {from && <path d={`M${from} ${y1}H${x + 2}M${from} ${y2}H${x + 2}`} />}
    <path d={`M${x} ${y1}V${y2}`} />
    <path d={`M${x} ${y1}l-1 5h2zM${x} ${y2}l-1 -5h2z`} fill="#000" />
    <rect x={x - 9} y={(y1 + y2) / 2 - 7} width="7" height="14" fill="#fff" stroke="none" />
    <Label x="0" y="0" textAnchor="middle" transform={`translate(${x - 3} ${(y1 + y2) / 2}) rotate(-90)`}>
      {text}
    </Label>
  </g>
);

const Rough = ({ x, y, down }) => (
  <g>
    <path
      d={down ? `M${x - 5} ${y + 8}l5 -8l4 6` : `M${x - 4} ${y - 6}l4 6l5 -9`}
      shapeRendering="auto"
    />
    <Label x={down ? x - 1 : x - 7} y={down ? y + 11 : y - 7}>
      6,3
    </Label>
  </g>
);

const Leader = ({ x, y, left }) => (
  <g>
    <path
      d={left ? `M${x} ${y}l-5 11h-24` : `M${x} ${y}l7 -11h23`}
      shapeRendering="auto"
    />
    <path d={left ? `M${x} ${y}l-4 4l2 2z` : `M${x} ${y}l2 -5l2 2z`} fill="#000" />
    <Label x={left ? x - 27 : x + 10} y={left ? y + 9 : y - 13} $size={8} $bold>
      А 2,5
    </Label>
  </g>
);

const Stop = ({ x, y }) => (
  <path d={`M${x} ${y - 10}v10M${x - 3} ${y - 4}l3 4l3 -4`} shapeRendering="auto" />
);

const Support = ({ x, y, flip }) => (
  <path d={`M${x} ${y}v-9l${flip ? -4 : 4} 5z`} shapeRendering="auto" />
);

const Shaft = ({ steps, axis, mid, slots = [] }) => (
  <g stroke="#00f" strokeWidth="2">
    <path d={`M${axis[0]} ${mid}H${axis[1]}`} stroke="#ff8000" strokeWidth="1" />
    {steps.map(([x1, x2, y1, y2]) => (
      <rect key={x1} x={x1} y={y1} width={x2 - x1} height={y2 - y1} />
    ))}
    {slots.map(([x, y, w, h]) => (
      <rect key={x} x={x} y={y} width={w} height={h} rx={h / 2} shapeRendering="auto" />
    ))}
  </g>
);

const notes = [
  { x: 523, y: 153, lines: ['005   заготовительная'] },
  { x: 529, y: 227, lines: ['010'] },
  {
    x: 540,
    y: 221,
    lines: [
      'Токарная 1 установ',
      '1 подрезать',
      'торец  2 точить',
      '⌀40,5 под',
      'шлифование',
      'выдерживая длину',
      '123±0,2  3 подвести',
      'задний центр',
      '4 точить ⌀51-0,5 под',
      'шлифование',
    ],
  },
  { x: 854, y: 240, lines: ['Станок 16К20', 'РИ Проходной упорный', 'отогнутый', 'ИИ ШЦ, линейка'] },
  {
    x: 512,
    y: 439,
    lines: [
      'Токарная 2 установ',
      '1 подрезать торец',
      '2 центровать',
      '3 точить 3 ступени',
      'под шлифование ⌀0,5',
      'выдерживая длины',
    ],
  },
  { x: 874, y: 445, lines: ['Станок 16К20', 'РИ проходной упорный,', 'проходной', 'ИИ ШЦ, линейка'] },
  {
    x: 513,
    y: 547,
    lines: ['фрезеровать 3 установ', '1 фрезеровать шпоночный', 'паз R4', '2 фрезеровать шпоночный', 'паз R7'],
  },
  { x: 900, y: 579, lines: ['Станок 6Н12', 'РИ фреза шпоночная', 'ИИ ШЦ, линейка'] },
  { x: 510, y: 663, lines: ['Термическая обработка', 'закалить деталь HRC 40..45'] },
  {
    x: 510,
    y: 702,
    lines: ['кругло-шлифовальная', '1 шлифовать', 'поверхности', '-⌀30х15', '-⌀40-20', '-⌀40-53', '-⌀30х70'],
  },
  { x: 859, y: 722, lines: ['станок 3М151', 'РИ шлифовальный круг', 'ПП'] },
];

const Drawing = () => (
  <Sheet
    viewBox="25 125 1410 661"
    preserveAspectRatio="xMinYMin meet"
    fill="none"
    stroke="#000"
    shapeRendering="crispEdges"
    role="img"
    aria-label="Эскизы валика"
  >
    {notes.map((n, i) => (
      <Note key={i} {...n} />
    ))}

    <HDim x1={603} x2={765} y={198} from={169} text="172" />
    <VDim x={789} y1={132} y2={169} from={765} text="47" />
    <Shaft steps={[[603, 765, 132, 169]]} axis={[603, 765]} mid={150} />

    <Shaft steps={[[605, 649, 218, 260], [649, 765, 220, 259]]} axis={[605, 765]} mid={239} />
    <path d="M703 220H765M703 258H765" />
    <VDim x={703} y1={220} y2={259} text="⌀40,5-0,06" />
    <HDim x1={649} x2={765} y={271} from={259} text="121±0,2" at={734} />
    <HDim x1={605} x2={765} y={290} from={260} text="170" sub="-0,6" at={671} />
    <Stop x={607} y={217} />
    <Support x={601} y={258} />
    <Rough x={725} y={220} />
    <Leader x={765} y={239} />

    <Shaft
      steps={[[605, 649, 324, 367], [649, 699, 327, 365], [699, 765, 331, 360]]}
      axis={[605, 765]}
      mid={345}
    />
    <VDim x={677} y1={327} y2={365} text="⌀40,1-0,06" />
    <HDim x1={699} x2={765} y={372} from={360} text="70±0,2" />
    <HDim x1={649} x2={765} y={387} from={365} text="121" sub="-0,2" />
    <HDim x1={605} x2={765} y={404} from={367} text="170" sub="-0,2" />
    <Stop x={607} y={323} />
    <Support x={601} y={364} />
    <Support x={769} y={350} flip />
    <Rough x={692} y={326} />
    <Rough x={711} y={330} />
    <Leader x={765} y={345} />

    <Shaft
      steps={[
        [605, 671, 452, 480],
        [671, 721, 447, 485],
        [721, 726, 444, 487],
        [726, 749, 447, 485],
        [749, 766, 452, 480],
      ]}
      axis={[605, 766]}
      mid={465}
    />
    <path d="M605 424V452M721 424V444M671 439V447" />
    <HDim x1={605} x2={721} y={424} from={424} text="122" sub="-0,2" />
    <HDim x1={605} x2={671} y={439} from={439} text="70±0,2" />
    <VDim x={634} y1={452} y2={480} text="30,1-0,06" />
    <VDim x={694} y1={447} y2={485} text="⌀40,1-0,06" />
    <VDim x={709} y1={445} y2={487} from={721} text="45-0,02" />
    <VDim x={781} y1={451} y2={479} from={766} text="30,5-0,06" />
    <Leader x={605} y={465} left />
    <Rough x={627} y={481} down />
    <Rough x={672} y={486} down />
    <Rough x={738} y={486} down />
    <Rough x={758} y={481} down />
    <Support x={730} y={449} flip />
    <path d="M712 485v9M709 489l3 -4l3 4" />

    <Shaft
      steps={[
        [606, 623, 569, 597],
        [623, 645, 564, 602],
        [645, 650, 562, 604],
        [650, 700, 564, 602],
        [700, 766, 569, 597],
      ]}
      slots={[[658, 576, 34, 14], [738, 578, 20, 9]]}
      axis={[606, 766]}
      mid={582}
    />
    <HDim x1={700} x2={766} y={610} from={597} text="70±0,2" />
    <HDim x1={650} x2={766} y={624} from={602} text="122" sub="-0,2" />
    <path d="M700 574H690L686 582M722 581H736L741 582" />
    <Label x="690" y="572">R7</Label>
    <Label x="724" y="578">R4</Label>
    <Rough x={614} y={569} />
    <Rough x={744} y={569} />
    <Stop x={674} y={564} />
    <Support x={618} y={606} />
    <Leader x={766} y={583} />

    <Shaft
      steps={[
        [605, 622, 722, 750],
        [622, 644, 717, 755],
        [644, 649, 715, 758],
        [649, 699, 717, 755],
        [699, 765, 722, 750],
      ]}
      slots={[[658, 730, 33, 13], [737, 733, 20, 7]]}
      axis={[605, 765]}
      mid={736}
    />
    <path d="M595 722H605M595 750H605M644 715H660M644 757H660" />
    <VDim x={595} y1={722} y2={750} text="⌀30" />
    <VDim x={637} y1={717} y2={755} text="⌀40" />
    <VDim x={658} y1={715} y2={757} text="⌀45" />
    <VDim x={715} y1={722} y2={750} text="⌀30" />
    <HDim x1={699} x2={765} y={763} from={750} text="70±0,2" />
    <HDim x1={649} x2={765} y={777} from={755} text="122" sub="-0,2" />
    <path d="M699 728H689L684 736M721 733H733L740 736" />
    <Label x="689" y="726">R7</Label>
    <Label x="722" y="731">R4</Label>
    <Rough x={612} y={722} />
    <Rough x={743} y={722} />
    <Stop x={672} y={717} />
    <Support x={616} y={759} />

    <g stroke="#8c8c8c" shapeRendering="auto">
      <path d="M936.500 166v36H972M936.500 166l-3 9h5zM972 202l-9 -3v5z" />
      <path d="M936 158l2 3l3 -3M938 161v4M972 194l5 8M977 194l-5 8" />
    </g>
  </Sheet>
);

/* ---------- page ---------- */

const Tool = ({ icon, name, ...rest }) => (
  <ToolButton type="button" aria-label={name} {...rest}>
    {icons[icon]}
  </ToolButton>
);

const DropArrow = ({ name }) => (
  <ArrowButton type="button" aria-label={name}>
    <Arrow />
  </ArrowButton>
);

const ComboBox = ({ w, name, value }) => (
  <Combo $w={w}>
    <ComboSelect aria-label={name} defaultValue={value}>
      <option>{value}</option>
    </ComboSelect>
    <ComboArrow>
      <Arrow />
    </ComboArrow>
  </Combo>
);

const WindowControls = ({ gap, end }) => (
  <WindowButtons $gap={gap} $end={end}>
    <PlainButton type="button" aria-label="Свернуть"><WindowIcon kind="min" /></PlainButton>
    <PlainButton type="button" aria-label="Восстановить"><WindowIcon kind="restore" /></PlainButton>
    <PlainButton type="button" aria-label="Закрыть"><WindowIcon kind="close" /></PlainButton>
  </WindowButtons>
);

const menu = [
  ['', 'Ф', 'айл'],
  ['', 'Р', 'едактор'],
  ['В', 'ы', 'делить'],
  ['', 'В', 'ид'],
  ['Вст', 'а', 'вка'],
  ['', 'И', 'нструменты'],
  ['С', 'п', 'ецификация'],
  ['С', 'е', 'рвис'],
  ['', 'О', 'кно'],
  ['', 'С', 'правка'],
  ['', 'Б', 'иблиотеки'],
];

export default () => {
  return (
    <App>
      <GlobalStyle />
      <TitleBar>
        <KompasLogo />
        <Title>КОМПАС-3D V16.1 - [Эскизы валика]</Title>
        <WindowControls gap={11} end={6} />
      </TitleBar>
      <MenuBar>
        <Grip $after={1} />
        <Icon crisp>
          <path d="M3.500 .5h9l2 2v13h-11z" fill="#fff" />
          <path d="M6.500 7.500h3v2h-3zM9.500 6.500h3v4h-3z" stroke="#00f" />
        </Icon>
        <MenuList>
          {menu.map(([a, key, b]) => (
            <MenuLink href="#" key={a + key + b}>
              {a}<u>{key}</u>{b}
            </MenuLink>
          ))}
        </MenuList>
        <WindowControls gap={3} end={4} />
      </MenuBar>

      <ToolRow>
        <Toolbar $start={2}>
          <Grip $after={5} />
          <Tool icon="doc" name="Создать" />
          <DropArrow name="Создать: варианты" />
          <Tool icon="open" name="Открыть" />
          <Tool icon="save" name="Сохранить" />
          <Separator />
          <Tool icon="print" name="Печать" />
          <DropArrow name="Печать: варианты" />
          <Separator />
          <Tool icon="preview" name="Предварительный просмотр" />
          <DropArrow name="Просмотр: варианты" />
          <Separator />
          <Tool icon="cut" name="Вырезать" />
          <Tool icon="copy" name="Копировать" />
          <Tool icon="paste" name="Вставить" />
          <Separator />
          <Tool icon="brush" name="Копировать свойства" />
          <Tool icon="props" name="Свойства" />
          <Separator />
          <Tool icon="undo" name="Отменить" $w={20} />
          <Tool icon="redo" name="Повторить" $w={20} />
          <Separator />
          <Tool icon="library" name="Менеджер библиотек" />
          <Tool icon="variables" name="Переменные" />
          <Tool icon="func" name="Функции" />
          <Separator />
          <Tool icon="renumber" name="Перенумеровать" />
          <Separator />
          <Tool icon="help" name="Справка" />
          <Tail><TailMark /></Tail>
        </Toolbar>
        <Toolbar $start={3}>
          <Grip $after={4} />
          <Tool icon="zoomPage" name="Показать все" />
          <Separator />
          <Tool icon="zoomArea" name="Увеличить рамкой" />
          <Separator />
          <Tool icon="zoomIn" name="Масштаб" />
          <ComboBox w={66} name="Текущий масштаб" value="0.2495" />
          <Separator />
          <Tool icon="refresh" name="Обновить изображение" />
          <Tail><TailMark /></Tail>
        </Toolbar>
      </ToolRow>

      <ToolRow>
        <Toolbar $start={2}>
          <Grip $after={3} />
          <Tool icon="step" name="Шаг курсора" />
          <ComboBox w={60} name="Шаг курсора" value="1.0" />
          <Separator />
          <Tool icon="layers" name="Слои" />
          <ComboBox w={126} name="Текущий слой" value="Системный слой (0)" />
          <Separator />
          <ToolButton type="button" aria-label="Привязки" $w={35} $on>
            {icons.magnet}&nbsp;<Arrow />
          </ToolButton>
          <Separator />
          <Tool icon="perp" name="Ограничения" />
          <Separator />
          <Tool icon="grid" name="Сетка" />
          <DropArrow name="Сетка: варианты" />
          <Separator />
          <Tool icon="axes" name="Локальная система координат" />
          <Separator $tight />
          <Tool icon="ortho" name="Ортогональное черчение" />
          <Tool icon="snaps" name="Округление" $on />
          <Separator />
          <Tool icon="coords" name="Координаты" />
          <CoordInput aria-label="Координата X" defaultValue="-432.582" />
          <CoordInput aria-label="Координата Y" defaultValue="-381.851" />
          <Tail><TailMark /></Tail>
        </Toolbar>
      </ToolRow>

      <ToolRow>
        <Toolbar $start={2}>
          <Grip $after={2} />
          {['geom', 'contour', 'pocket', 'updown', 'tree'].map((name, i) => (
            <SmallButton type="button" key={name} aria-label={name}>
              <SmallIcon $on={i === 0}>{icons[name]}</SmallIcon>
              <Dots />
            </SmallButton>
          ))}
          <Separator $tight />
          <Tool icon="extend" name="Удлинить" />
          <Tool icon="planes" name="Слои вида" />
          <Tool icon="align" name="Выровнять" />
          <Tool icon="find" name="Найти" />
          <Separator $tight />
          <Tool icon="measure" name="Измерить" />
          <Tool icon="findSize" name="Найти размер" />
          <Separator $tight />
          <Tool icon="bend" name="Деформация" />
          <Tool icon="bendAll" name="Преобразовать" />
          <Separator $tight />
          <Tool icon="shade" name="Обозначение центра" />
          <Tool icon="equid" name="Эквидистанта" />
          <Separator $tight />
          <Tool icon="paint" name="Стиль" />
          <Tool icon="replace" name="Заменить" />
          <Separator $tight />
          <Tool icon="count" name="Нумерация" />
          <Tool icon="countRefresh" name="Обновить нумерацию" />
          <Separator $tight />
          <Tool icon="wrench" name="Настройка" />
          <Tool icon="helpBox" name="Подсказка" />
          <Tail><TailMark /></Tail>
        </Toolbar>
      </ToolRow>

      <Workspace>
        <SideColumn>
          <SidePanel>
            <SideDots />
            {Object.entries(sideIcons).map(([name, icon], i) => (
              <React.Fragment key={name}>
                {i === 10 && <SideRule />}
                <SideButton type="button" aria-label={name} $on={name === 'size'} $tall={i > 9}>
                  {icon}
                </SideButton>
              </React.Fragment>
            ))}
          </SidePanel>
          <SideTail>
            <svg width="10" height="7" viewBox="0 0 10 7" aria-hidden="true">
              <path d="M1 0h1v6H1zM4 0l3 3-3 4z" />
            </svg>
          </SideTail>
        </SideColumn>
        <Canvas>
          <Drawing />
        </Canvas>
      </Workspace>

      <PropertyArea>
        <PropertyGrip />
        <PropertyPanel />
      </PropertyArea>
      <StatusBar>
        <StatusText>
          Щелкните левой кнопкой мыши на объекте для его выделения (вместе с Ctrl или Shift - добавить к выделенным)
        </StatusText>
        <StatusCell />
      </StatusBar>

      <TaskBar>
        <TaskButton type="button" $w={50} $bold>
          <svg width="14" height="14" viewBox="0 0 14 14" aria-hidden="true">
            <path d="M2 2c2-1 3-1 5 0L6 7c-2-1-3-1-5 0z" fill="#e8512a" />
            <path d="M8 2c2 1 3 1 5 0l-1 5c-2 1-3 1-5 0z" fill="#72b63a" />
            <path d="M1 8c2-1 3-1 5 0l-1 5c-2-1-3-1-5 0z" fill="#3a86d8" />
            <path d="M7 8c2 1 3 1 5 0l-1 5c-2 1-3 1-5 0z" fill="#f7b720" />
          </svg>
          Пуск
        </TaskButton>
        <QuickGroup>
          <QuickButton type="button" aria-label="Калькулятор" $narrow>
            <Icon>
              <path d="M2.500 .5h11v15h-11z" fill="#cfe6f8" stroke="#5b9bd0" />
              <path d="M4 2.500h8v3H4z" fill="#fff" stroke="#5b9bd0" />
              <path d="M4 8.500h8M4 11h8M4 13.500h8" stroke="#3577b5" strokeDasharray="2 1" />
            </Icon>
          </QuickButton>
          <QuickButton type="button" aria-label="Internet Explorer" $narrow>
            <Icon>
              <path d="M13.500 11C11 16 3 14 3 8.500S12 2 13 8.500H5" stroke="#2a9be0" strokeWidth="2.500" />
              <path d="M1 14C-1 9 10 0 15 2.500" stroke="#f3b81c" strokeWidth="1.500" />
            </Icon>
          </QuickButton>
        </QuickGroup>
        <TaskButton type="button">
          <Icon>
            <path d="M1 2h6v12H1z" fill="#f4d774" stroke="#c9a53a" />
            <path d="M5 1l5 2v12l-5-1z" fill="#fbe9a4" stroke="#c9a53a" />
            <path d="M9 4h4v10H9z" fill="#f0cf62" stroke="#c9a53a" />
          </Icon>
          Ишкулов
        </TaskButton>
        <QuickButton type="button" aria-label="Медиа">
          <Icon>
            <path d="M1 1h14v14H1z" fill="#bfe0f7" stroke="#4d9bd2" />
            <circle cx="8" cy="8" r="5.500" fill="#f78a10" stroke="#d56c00" />
            <path d="M6.500 5v6l4-3z" fill="#fff" stroke="none" />
          </Icon>
        </QuickButton>
        <TaskButton type="button">
          <Icon>
            <circle cx="8" cy="8.500" r="7" fill="#f0522a" stroke="none" />
            <path d="M10 1c5 3 6 8 4 11-2 4-7 4-9 3 5-1 8-4 5-14z" fill="#ffb81c" stroke="none" />
            <circle cx="8" cy="8" r="3.500" fill="#3340a0" stroke="none" />
            <path d="M1 4c2 1 4 1 6 3-3 0-3 3 0 4-3 1-6-1-6-7z" fill="#e02840" stroke="none" />
          </Icon>
          Создание материала Ч...
        </TaskButton>
        <QuickButton type="button" aria-label="Chrome">
          <Icon>
            <path d="M8 8L2 4.500A7 7 0 0 1 14 4.500z" fill="#dc4437" stroke="none" />
            <path d="M8 8l6-3.500A7 7 0 0 1 8 15z" fill="#fc3" stroke="none" />
            <path d="M8 8v7A7 7 0 0 1 2 4.500z" fill="#1ba25c" stroke="none" />
            <circle cx="8" cy="8" r="3" fill="#4384f3" stroke="#fff" />
          </Icon>
        </QuickButton>
        <TaskButton type="button" $on $bold>
          <KompasLogo />
          КОМПАС-3D V16.1 - [...
        </TaskButton>
        <Language>RU</Language>
        <TrayRule />
        <Tray>
          {Object.entries(trayIcons).map(([name, icon]) => (
            <PlainButton type="button" key={name} aria-label={name}>{icon}</PlainButton>
          ))}
          <Clock>10:45</Clock>
          <Icon>
            <path d="M1 3h14v9H1z" fill="#2465c8" stroke="#173f86" />
            <path d="M1 12.500h14" stroke="#9cc3f0" />
            <path d="M2 10h3v2H2z" fill="#fff" stroke="none" />
          </Icon>
        </Tray>
      </TaskBar>
    </App>
  );
};
